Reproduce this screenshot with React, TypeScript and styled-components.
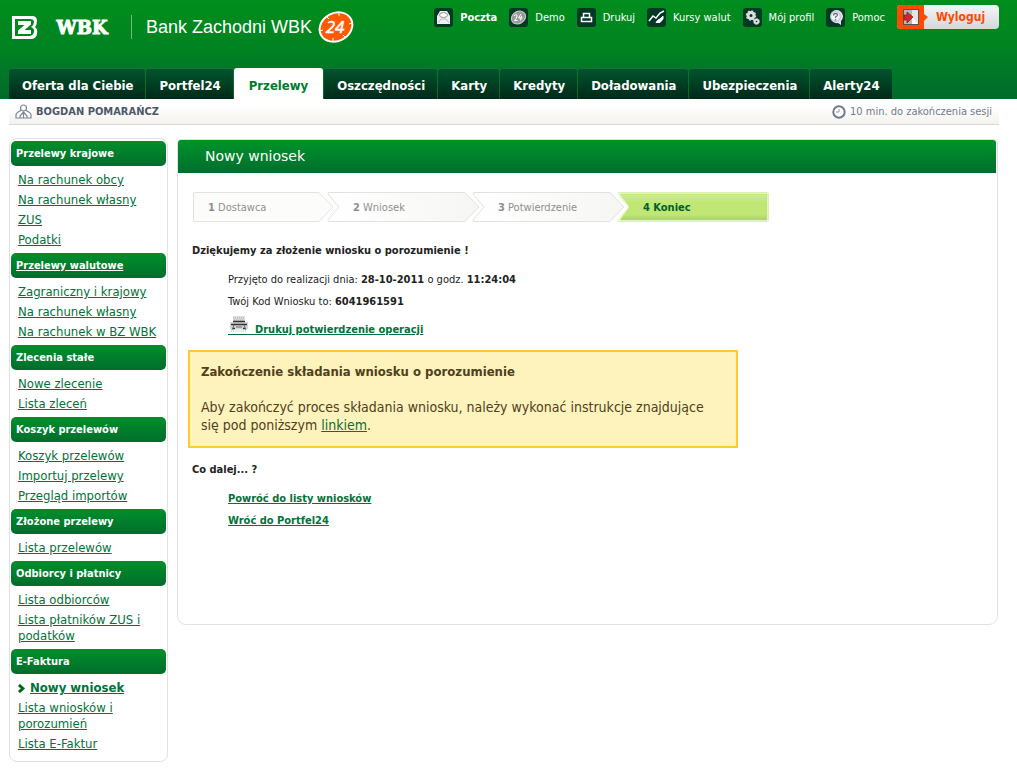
import React from "react";
import styled, { createGlobalStyle } from "styled-components";

const GlobalStyle = createGlobalStyle`
  * { box-sizing: border-box; }
  body {
    margin: 0;
    background: #fff;
    color: #222;
    font-family: "DejaVu Sans Condensed", Tahoma, "Noto Sans", sans-serif;
    font-size: 11px;
  }
  h1, h2, h3, p, ul, ol { margin: 0; padding: 0; }
  ul, ol { list-style: none; }
`;

const Header = styled.header`
  display: flex;
  flex-direction: column;
  justify-content: space-between;
  height: 99px;
  padding: 0 18px 0 9px;
  background: linear-gradient(#008e1c, #008222 50%, #006a2c);
`;

const HeaderTop = styled.div`
  display: flex;
  justify-content: space-between;
  align-items: flex-start;
`;

const Brand = styled.a`
  display: flex;
  align-items: center;
  padding: 9px 0 0 3px;
  color: #fff;
  text-decoration: none;
`;

const BrandName = styled.span`
  display: flex;
  align-items: center;
  height: 24px;
  margin: 0 6px 0 13px;
  padding-left: 14px;
  border-left: 1px solid #6fbd7a;
  font: 18px/24px "Liberation Sans", Arial, sans-serif;
  white-space: nowrap;
`;

const Tools = styled.ul`
  display: flex;
  align-items: center;
  gap: 12px;
  padding-top: 5px;
`;

const ToolLink = styled.a<{ $strong?: boolean }>`
  display: flex;
  align-items: center;
  gap: 7px;
  color: #fff;
  font-weight: ${(p) => (p.$strong ? "bold" : "normal")};
  line-height: 19px;
  text-decoration: none;
  white-space: nowrap;
`;

const Logout = styled.button`
  display: flex;
  align-items: center;
  width: 102px;
  height: 24px;
  padding: 0;
  border: 0;
  border-radius: 4px;
  overflow: hidden;
  background: linear-gradient(#f4f5f5, #d4d8da);
  color: #ff4a00;
  font: bold 12px "DejaVu Sans Condensed", Tahoma, sans-serif;
  cursor: pointer;

  svg { flex: none; }
  span { flex: 1; text-align: center; padding-right: 7px; }
`;

const Tabs = styled.nav`
  display: flex;
  align-items: flex-end;
  gap: 1px;
`;

const Tab = styled.a<{ $active?: boolean }>`
  height: 31px;
  padding: ${(p) => (p.$active ? "0 15px" : "0 12px 0 13px")};
  border-top: 1px solid ${(p) => (p.$active ? "#fff" : "#1f6a40")};
  border-radius: 3px 3px 0 0;
  background: ${(p) => (p.$active ? "#fff" : "linear-gradient(#00552c, #00291a)")};
  color: ${(p) => (p.$active ? "#007a2c" : "#fff")};
  font-size: 13px;
  font-weight: bold;
  line-height: 33px;
  text-decoration: none;
  white-space: nowrap;
`;

const UserBar = styled.div`
  display: flex;
  justify-content: space-between;
  align-items: center;
  height: 26px;
  margin: 0 18px 0 9px;
  padding: 0 7px 0 6px;
  border-bottom: 1px solid #d8d7d3;
  background: linear-gradient(#fff 30%, #f4f2ed);
`;

const UserInfo = styled.span<{ $muted?: boolean }>`
  display: flex;
  align-items: center;
  gap: 4px;
  color: ${(p) => (p.$muted ? "#6f7b8e" : "#4c586a")};
  font-weight: ${(p) => (p.$muted ? "normal" : "bold")};
`;

const Columns = styled.div`
  display: flex;
  align-items: flex-start;
  gap: 9px;
  padding: 13px 19px 8px 9px;
`;

const Sidebar = styled.nav`
  flex: none;
  width: 159px;
  padding: 2px 1px 4px;
  border: 1px solid #e2e2e2;
  border-radius: 8px;
`;

const GroupTitle = styled.h2<{ $linked?: boolean }>`
  height: 25px;
  padding-left: 5px;
  border-radius: 5px;
  background: linear-gradient(#008f2b, #006d2d);
  color: #fff;
  font-size: 11px;
  line-height: 26px;
  text-decoration: ${(p) => (p.$linked ? "underline" : "none")};
`;

const Group = styled.ul`
  padding: 4px 0 3px 7px;
`;

const GroupItem = styled.li`
  display: flex;
  align-items: center;
  gap: 4px;
  padding: 2px 0;
  font-size: 13px;
  line-height: 16px;
`;

const MenuLink = styled.a<{ $current?: boolean }>`
  color: #00733a;
  font-weight: ${(p) => (p.$current ? "bold" : "normal")};
`;

const Panel = styled.main`
  flex: 1;
  min-width: 0;
  min-height: 486px;
  margin-top: 1px;
  border: 1px solid #e2e2e2;
  border-radius: 4px 4px 9px 9px;
`;

const PanelTitle = styled.h1`
  height: 33px;
  margin-right: 1px;
  padding-left: 27px;
  border-radius: 3px 3px 0 0;
  background: linear-gradient(#00921f, #00902a 10%, #006d2e);
  color: #fff;
  font: 14px/32px "DejaVu Sans", Verdana, sans-serif;
`;

const PanelBody = styled.div`
  padding: 19px 10px 10px;
`;

const Steps = styled.ol`
  display: flex;
  margin-bottom: 20px;
  padding-left: 5px;
`;

const Step = styled.li<{ $current?: boolean }>`
  position: relative;
  isolation: isolate;
  width: 145px;
  height: 30px;
  padding-left: 15px;
  color: ${(p) => (p.$current ? "#00602f" : "#8f8f8f")};
  font-weight: ${(p) => (p.$current ? "bold" : "normal")};
  line-height: 32px;

  svg {
    position: absolute;
    top: 0;
    left: -11px;
    z-index: -1;
  }
`;

const SectionTitle = styled.h3`
  padding-left: 4px;
  font-size: 11px;
  line-height: 18px;
`;

const Lines = styled.div`
  padding: 9px 0 9px 40px;
`;

const Line = styled.p`
  line-height: 22px;
`;

const ActionLink = styled.a`
  color: #00733a;
  font-weight: bold;
`;

const PrintLine = styled.p`
  height: 28px;
  padding-top: 3px;
  line-height: 24px;

  svg { vertical-align: -3px; }
`;

const Notice = styled.section`
  max-width: 550px;
  margin-bottom: 13px;
  padding: 10px 11px 12px;
  border: 2px solid #ffcb2b;
  background: #fff3bd;
  color: #50401c;
`;

const NoticeTitle = styled.h3`
  margin-bottom: 16px;
  font-size: 13px;
  line-height: 20px;
`;

const NoticeText = styled.p`
  font-size: 14px;
  line-height: 18px;

  a { color: #00733a; }
`;

const BankMark = () => (
  <svg width="106" height="36" viewBox="0 0 106 36" aria-label="BZ WBK">
    <path d="M0 7H20Q25 7 25 12Q25 16 23 18Q26 20 25 25Q24 30 19 30H0Z" fill="#fff" />
    <path d="M3 10H18Q22 10 22 13Q22 16 19 18Q23 20 22 23Q21 27 17 27H3Z" fill="#00861f" />
    <path d="M6 12H19V15.500L12.500 21H19V25H6V21.500L12.500 16H6Z" fill="#fff" />
    <text x="70" y="25" textAnchor="middle" fill="#fff" stroke="#fff" strokeWidth="1" fontFamily="DejaVu Serif, serif" fontWeight="bold" fontSize="18">
      WBK
    </text>
  </svg>
);

const Clock24 = () => (
  <svg width="36" height="34" viewBox="0 0 36 34" aria-hidden="true">
    <ellipse cx="18" cy="17" rx="17" ry="14" transform="rotate(-28 18 17)" fill="#ff5a00" stroke="#fff" strokeWidth="2" />
    <path d="M21 3v3M15 31v-3M2 21l3-1M34 13l-3 1M9 7l2 2M27 27l-2-2" stroke="#fff" strokeWidth="1" />
    <text x="17" y="23" textAnchor="middle" fill="#fff" stroke="#fff" strokeWidth=".5" fontFamily="Open Sans, sans-serif" fontStyle="italic" fontSize="17">
      24
    </text>
  </svg>
);

const Tile = ({ children }: { children: React.ReactNode }) => (
  <svg width="19" height="19" viewBox="0 0 19 19" aria-hidden="true">
    <rect width="19" height="19" rx="3" fill="#003a22" />
    {children}
  </svg>
);

const MailIcon = () => (
  <Tile>
    <path d="M3 8L6 3H13L16 8V16H3Z" fill="#f0f0f0" />
    <ellipse cx="9.500" cy="7" rx="4" ry="2.500" fill="#fff" stroke="#8d9490" />
    <path d="M4 15L7 11H12L15 15" fill="none" stroke="#b5bab7" />
  </Tile>
);

const DemoIcon = () => (
  <Tile>
    <ellipse cx="9.500" cy="9.500" rx="7.500" ry="6" transform="rotate(-30 9.500 9.500)" fill="#999" stroke="#ccc" />
    <path d="M5 8Q8 5 8 8Q8 10 5.500 12.500H8.500M12 6L9.500 10H13.500M12.500 8L11.500 12.500" fill="none" stroke="#fff" />
  </Tile>
);

const PrintIcon = () => (
  <Tile>
    <path d="M6.500 9V5.500H12.500V9M4.500 9.500H14.500V13.500H4.500Z" fill="none" stroke="#fff" strokeWidth="1.500" />
  </Tile>
);

const RatesIcon = () => (
  <Tile>
    <path d="M2 13L6 8L9 10L13 5L17 3" fill="none" stroke="#fff" strokeWidth="1.500" />
    <path d="M9 14.500H13L16 11V8L13 11L11 12Z" fill="#fff" stroke="#fff" />
  </Tile>
);

const ProfileIcon = () => (
  <Tile>
    <circle cx="8" cy="7.500" r="3" fill="none" stroke="#ddd" strokeWidth="3" />
    <circle cx="8" cy="7.500" r="4.500" fill="none" stroke="#ddd" strokeWidth="1.500" strokeDasharray="1.800 1.700" />
    <circle cx="13.500" cy="13.500" r="1.800" fill="none" stroke="#ddd" strokeWidth="2" />
    <circle cx="13.500" cy="13.500" r="3" fill="none" stroke="#ddd" strokeDasharray="1.200 1.100" />
  </Tile>
);

const HelpIcon = () => (
  <Tile>
    <path d="M9.500 2A6.500 6.500 0 1 0 12 15L15 17V13A6.500 6.500 0 0 0 9.500 2Z" fill="#dfe2e8" />
    <circle cx="9.500" cy="8.500" r="4.800" fill="#f4f5f7" stroke="#8d97a6" strokeWidth=".6" />
    <path d="M7.500 7.500Q7.500 5.500 9.500 5.500Q11.500 5.500 11.500 7Q11.500 8 9.500 9V10M9.500 11V12.500" fill="none" stroke="#667184" strokeWidth="1.300" />
  </Tile>
);

const ExitIcon = () => (
  <svg width="32" height="24" viewBox="0 0 32 24" aria-hidden="true">
    <path d="M0 0H27V9L31 12L27 16V24H0Z" fill="#ff4a00" />
    <rect x="6" y="4" width="16" height="16" fill="#555" />
    <path d="M7 5H15V19H7Z" fill="#b5b5b5" />
    <path d="M15 5H21V19H15Z" fill="#e4e4e4" />
    <path d="M15 12L21 19H15Z" fill="#fff" />
    <path d="M7 10H10V7L16 12L10 18V15H7Z" fill="#d8232a" stroke="#861418" strokeWidth=".7" />
  </svg>
);

const UserIcon = () => (
  <svg width="17" height="16" viewBox="0 0 17 16" aria-hidden="true">
    <g fill="#fff" stroke="#7b8698" strokeWidth="1.200">
      <path d="M1 14V11Q1 9 5 7L6 6H11L12 7Q16 9 16 11V14Z" />
      <circle cx="8.500" cy="4" r="3" />
      <path d="M5 14V12L8.500 8L12 12V14M8.500 8V14" fill="none" />
    </g>
  </svg>
);

const ClockIcon = () => (
  <svg width="14" height="14" viewBox="0 0 14 14" aria-hidden="true">
    <circle cx="7" cy="7" r="5.700" fill="#fff" stroke="#6f7b8e" strokeWidth="2" />
    <path d="M7 4V7H4" fill="none" stroke="#8f99a8" />
  </svg>
);

const PrinterIcon = () => (
  <svg width="27" height="20" viewBox="0 0 27 20" aria-hidden="true">
    <g transform="translate(1 0)">
      <path d="M4 0H16V5H4Z" fill="#ddd" />
      <path d="M1 6H19V13H1Z" fill="#d6d6d6" />
      <path d="M4 2H16M5 4H15M2 15H18" stroke="#aaa" strokeDasharray="1 1" />
      <path d="M4 5.500H16M2 8.500H18M4 12.500H6M14 12.500H16" stroke="#333" strokeWidth="1.500" />
      <path d="M5 9L3 14M15 9L17 14M7 11H13" stroke="#666" />
      <path d="M6 13H14V16H6Z" fill="#eee" />
    </g>
    <path d="M0 18.500H27" stroke="#00733a" />
  </svg>
);

const Chevron = () => (
  <svg width="8" height="9" viewBox="0 0 8 9" aria-hidden="true">
    <path d="M1 1L5 4.500L1 8" fill="none" stroke="#2c9a1f" strokeWidth="3" />
    <path d="M1 1L5 4.500L1 8" fill="none" stroke="#00602f" strokeWidth="2" />
  </svg>
);

const StepShape = ({ kind }: { kind: "first" | "middle" | "current" }) => (
  <svg width="154" height="30" viewBox="0 0 154 30" aria-hidden="true">
    <defs>
      <linearGradient id="stepIdle" x1="0" x2="1">
        <stop offset="0" stopColor="#fff" />
        <stop offset="1" stopColor="#f6f6f4" />
      </linearGradient>
      <linearGradient id="stepCurrent" x1="0" x2="0" y1="0" y2="1">
        <stop offset="0" stopColor="#cdee90" />
        <stop offset=".35" stopColor="#c0e673" />
        <stop offset=".8" stopColor="#c0e673" />
        <stop offset="1" stopColor="#a9d066" />
      </linearGradient>
    </defs>
    {kind === "first" && (
      <path d="M13 .5H137L151 15L137 29.500H13Q11.500 29.500 11.500 28V2Q11.500 .5 13 .5Z" fill="#fcfdfb" stroke="#e2e2e2" />
    )}
    {kind === "middle" && (
      <path d="M2 .5H138L152 15L138 29.500H2Q.5 29.500 1 28L12 15L1 2Q.5 .5 2 .5Z" fill="url(#stepIdle)" stroke="#e2e2e2" />
    )}
    {kind === "current" && (
      <>
        <path d="M2 .5H150Q151.500 .5 151.500 2V28Q151.500 29.500 150 29.500H2Q.5 29.500 1 28L12 15L1 2Q.5 .5 2 .5Z" fill="#fff" stroke="#dcf0b4" />
        <path d="M3 2H150V28H3L13 15Z" fill="url(#stepCurrent)" stroke="#b7e35f" strokeWidth=".8" />
      </>
    )}
  </svg>
);

const tools = [
  { label: "Poczta", icon: <MailIcon />, strong: true },
  { label: "Demo", icon: <DemoIcon /> },
  { label: "Drukuj", icon: <PrintIcon /> },
  { label: "Kursy walut", icon: <RatesIcon /> },
  { label: "Mój profil", icon: <ProfileIcon /> },
  { label: "Pomoc", icon: <HelpIcon /> },
];

const tabs = [
  "Oferta dla Ciebie",
  "Portfel24",
  "Przelewy",
  "Oszczędności",
  "Karty",
  "Kredyty",
  "Doładowania",
  "Ubezpieczenia",
  "Alerty24",
];

const menu = [
  { title: "Przelewy krajowe", items: ["Na rachunek obcy", "Na rachunek własny", "ZUS", "Podatki"] },
  { title: "Przelewy walutowe", linked: true, items: ["Zagraniczny i krajowy", "Na rachunek własny", "Na rachunek w BZ WBK"] },
  { title: "Zlecenia stałe", items: ["Nowe zlecenie", "Lista zleceń"] },
  { title: "Koszyk przelewów", items: ["Koszyk przelewów", "Importuj przelewy", "Przegląd importów"] },
  { title: "Złożone przelewy", items: ["Lista przelewów"] },
  { title: "Odbiorcy i płatnicy", items: ["Lista odbiorców", "Lista płatników ZUS i podatków"] },
  { title: "E-Faktura", items: ["Nowy wniosek", "Lista wniosków i porozumień", "Lista E-Faktur"] },
];

const steps = ["Dostawca", "Wniosek", "Potwierdzenie", "Koniec"];

export default function App() {
  return (
    <>
      <GlobalStyle />
      <Header>
        <HeaderTop>
          <Brand href="#">
            <BankMark />
            <BrandName>Bank Zachodni WBK</BrandName>
            <Clock24 />
          </Brand>
          <Tools>
            {tools.map((t) => (
              <li key={t.label}>
                <ToolLink href="#" $strong={t.strong}>
                  {t.icon}
                  {t.label}
                </ToolLink>
              </li>
            ))}
            <li>
              <Logout type="button">
                <ExitIcon />
                <span>Wyloguj</span>
              </Logout>
            </li>
          </Tools>
        </HeaderTop>
        <Tabs>
          {tabs.map((t) => (
            <Tab key={t} href="#" $active={t === "Przelewy"}>
              {t}
            </Tab>
          ))}
        </Tabs>
      </Header>
      <UserBar>
        <UserInfo>
          <UserIcon />
          BOGDAN POMARAŃCZ
        </UserInfo>
        <UserInfo $muted>
          <ClockIcon />
          10 min. do zakończenia sesji
        </UserInfo>
      </UserBar>
      <Columns>
        <Sidebar>
          {menu.map((g) => (
            <React.Fragment key={g.title}>
              <GroupTitle $linked={g.linked}>{g.title}</GroupTitle>
              <Group>
                {g.items.map((item) => {
                  const current = item === "Nowy wniosek";
                  return (
                    <GroupItem key={item}>
                      {current && <Chevron />}
                      <MenuLink href="#" $current={current}>
                        {item}
                      </MenuLink>
                    </GroupItem>
                  );
                })}
              </Group>
            </React.Fragment>
          ))}
        </Sidebar>
        <Panel>
          <PanelTitle>Nowy wniosek</PanelTitle>
          <PanelBody>
            <Steps>
              {steps.map((s, i) => (
                <Step key={s} $current={i === 3}>
                  <StepShape kind={i === 0 ? "first" : i === 3 ? "current" : "middle"} />
                  <b>{i + 1}</b> {s}
                </Step>
              ))}
            </Steps>
            <SectionTitle>Dziękujemy za złożenie wniosku o porozumienie !</SectionTitle>
            <Lines>
              <Line>
                Przyjęto do realizacji dnia: <b>28-10-2011</b> o godz. <b>11:24:04</b>
              </Line>
              <Line>
                Twój Kod Wniosku to: <b>6041961591</b>
              </Line>
              <PrintLine>
                <ActionLink href="#">
                  <PrinterIcon />
                  Drukuj potwierdzenie operacji
                </ActionLink>
              </PrintLine>
            </Lines>
            <Notice>
              <NoticeTitle>Zakończenie składania wniosku o porozumienie</NoticeTitle>
              <NoticeText>
                Aby zakończyć proces składania wniosku, należy wykonać instrukcje znajdujące się pod poniższym{" "}
                <a href="#">linkiem</a>.
              </NoticeText>
            </Notice>
            <SectionTitle>Co dalej... ?</SectionTitle>
            <Lines>
              <Line>
                <ActionLink href="#">Powróć do listy wniosków</ActionLink>
              </Line>
              <Line>
                <ActionLink href="#">Wróć do Portfel24</ActionLink>
              </Line>
            </Lines>
          </PanelBody>
        </Panel>
      </Columns>
    </>
  );
}
